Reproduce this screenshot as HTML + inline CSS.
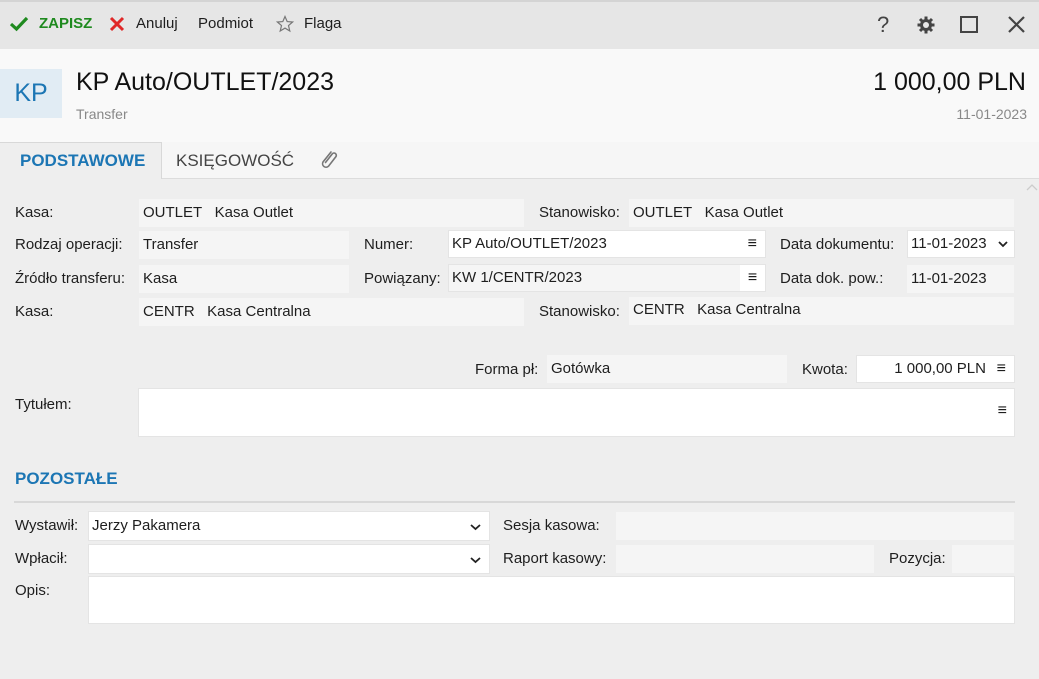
<!DOCTYPE html>
<html><head><meta charset="utf-8"><style>
*{margin:0;padding:0;box-sizing:border-box}
body{width:1039px;height:679px;background:#eeeeee;font-family:"Liberation Sans",sans-serif;font-size:15px;color:#1e1e1e;position:relative;overflow:hidden}
.a{position:absolute;white-space:nowrap}
.l{position:absolute;height:28px;line-height:28px;white-space:nowrap}
.f{position:absolute;height:28px;line-height:28px;background:#f5f5f5;padding-left:4px;white-space:nowrap}
.w{background:#fff;border:1px solid #e4e4e4;line-height:26px;padding-left:3px}
.m{position:absolute;right:8px;top:0;font-size:16px;font-weight:bold}
.c{position:absolute;right:6px;top:9px}
</style></head><body>
<div class="a" style="left:0;top:0;width:1039px;height:49px;background:#e6e6e6;border-top:2px solid #d4d4d4"></div>
<svg class="a" style="left:9px;top:16px" width="20" height="16"><path d="M2 8 L7.5 13 L18 2" stroke="#1f8a1f" stroke-width="3.2" fill="none"/></svg>
<div class="a" style="left:39px;top:15px;color:#1f8a1f;font-weight:bold;font-size:15px">ZAPISZ</div>
<svg class="a" style="left:109px;top:16px" width="16" height="16"><path d="M2 2L14 14M14 2L2 14" stroke="#e02828" stroke-width="3" fill="none"/></svg>
<div class="a" style="left:136px;top:15px;font-size:15px">Anuluj</div>
<div class="a" style="left:198px;top:15px;font-size:15px">Podmiot</div>
<svg class="a" style="left:276px;top:15px" width="18" height="18"><path d="M9 1.5L11.2 6.6L16.6 7L12.5 10.6L13.8 16L9 13.1L4.2 16L5.5 10.6L1.4 7L6.8 6.6Z" stroke="#777" stroke-width="1.2" fill="none"/></svg>
<div class="a" style="left:304px;top:15px;font-size:15px">Flaga</div>
<div class="a" style="left:877px;top:12px;font-size:22px;color:#444">?</div>
<svg class="a" style="left:916px;top:15px" width="20" height="20" viewBox="0 0 20 20"><g fill="#444"><circle cx="10" cy="10" r="6"/><g stroke="#444" stroke-width="3"><path d="M10 1.5V18.5M1.5 10H18.5M4 4L16 16M16 4L4 16"/></g></g><circle cx="10" cy="10" r="3" fill="#e6e6e6"/></svg>
<div class="a" style="left:960px;top:16px;width:18px;height:17px;border:2px solid #444"></div>
<svg class="a" style="left:1007px;top:15px" width="19" height="19"><path d="M2 2L17 17M17 2L2 17" stroke="#444" stroke-width="2.2"/></svg>

<div class="a" style="left:0;top:49px;width:1039px;height:93px;background:#f9f9f9"></div>
<div class="a" style="left:0;top:69px;width:62px;height:49px;background:#e1ecf4;color:#1c76b4;font-size:25px;line-height:49px;text-align:center">KP</div>
<div class="a" style="left:76px;top:68px;font-size:25px;color:#111">KP Auto/OUTLET/2023</div>
<div class="a" style="left:76px;top:106px;font-size:14px;color:#888">Transfer</div>
<div class="a" style="right:13px;top:68px;font-size:25px;color:#111">1 000,00 PLN</div>
<div class="a" style="right:12px;top:106px;font-size:14px;color:#888">11-01-2023</div>

<div class="a" style="left:0;top:142px;width:1039px;height:37px;background:#f6f6f6;border-bottom:1px solid #dcdcdc"></div>
<div class="a" style="left:0;top:142px;width:162px;height:37px;background:#eeeeee;border-right:1px solid #d8d8d8;border-top:1px solid #d8d8d8"></div>
<div class="a" style="left:20px;top:151px;color:#1c76b4;font-weight:bold;font-size:17px">PODSTAWOWE</div>
<div class="a" style="left:176px;top:151px;color:#444;font-size:17px">KSIĘGOWOŚĆ</div>
<svg class="a" style="left:317px;top:147px" width="24" height="26" viewBox="0 0 24 26"><path d="M14 5L6 15a3.5 3.5 0 0 0 5.5 4.2L19 9.5a2.3 2.3 0 0 0-3.6-2.8L8.5 15.5" stroke="#777" stroke-width="1.6" fill="none" stroke-linecap="round"/></svg>
<svg class="a" style="left:1026px;top:183px" width="12" height="8"><path d="M1 7L6 2L11 7" stroke="#ccc" stroke-width="1.3" fill="none"/></svg>

<div class="l" style="left:15px;top:199px">Kasa:</div>
<div class="f" style="left:139px;top:199px;width:385px">OUTLET&nbsp;&nbsp; Kasa Outlet</div>
<div class="l" style="left:539px;top:199px">Stanowisko:</div>
<div class="f" style="left:629px;top:199px;width:385px">OUTLET&nbsp;&nbsp; Kasa Outlet</div>

<div class="l" style="left:15px;top:231px">Rodzaj operacji:</div>
<div class="f" style="left:139px;top:231px;width:210px">Transfer</div>
<div class="l" style="left:364px;top:231px">Numer:</div>
<div class="f w" style="left:448px;top:230px;width:318px">KP Auto/OUTLET/2023<span class="m">≡</span></div>
<div class="l" style="left:780px;top:231px">Data dokumentu:</div>
<div class="f w" style="left:907px;top:230px;width:108px">11-01-2023<svg class="c" width="10" height="8"><path d="M1 2L5 6L9 2" stroke="#222" stroke-width="1.8" fill="none"/></svg></div>

<div class="l" style="left:15px;top:265px">Źródło transferu:</div>
<div class="f" style="left:139px;top:265px;width:210px">Kasa</div>
<div class="l" style="left:364px;top:265px">Powiązany:</div>
<div class="f" style="left:448px;top:264px;width:318px;border:1px solid #e4e4e4;line-height:26px;padding-left:3px">KW 1/CENTR/2023<span class="m" style="background:#fff;right:0;width:25px;height:26px;text-align:center">≡</span></div>
<div class="l" style="left:780px;top:265px">Data dok. pow.:</div>
<div class="f" style="left:907px;top:265px;width:107px">11-01-2023</div>

<div class="l" style="left:15px;top:298px">Kasa:</div>
<div class="f" style="left:139px;top:298px;width:385px">CENTR&nbsp;&nbsp; Kasa Centralna</div>
<div class="l" style="left:539px;top:298px">Stanowisko:</div>
<div class="f" style="left:629px;top:297px;width:385px;line-height:26px">CENTR&nbsp;&nbsp; Kasa Centralna</div>

<div class="l" style="left:475px;top:356px">Forma pł:</div>
<div class="f" style="left:547px;top:355px;width:240px">Gotówka</div>
<div class="l" style="left:802px;top:356px">Kwota:</div>
<div class="f w" style="left:856px;top:355px;width:159px;text-align:right;padding-right:28px">1 000,00 PLN<span class="m">≡</span></div>

<div class="l" style="left:15px;top:391px">Tytułem:</div>
<div class="a" style="left:138px;top:388px;width:877px;height:49px;background:#fff;border:1px solid #e4e4e4"><span style="position:absolute;right:7px;top:13px;font-size:16px;font-weight:bold">≡</span></div>

<div class="a" style="left:15px;top:469px;color:#1c76b4;font-weight:bold;font-size:17px">POZOSTAŁE</div>
<div class="a" style="left:14px;top:501px;width:1001px;height:2px;background:#d8d8d8"></div>

<div class="l" style="left:15px;top:512px">Wystawił:</div>
<div class="f w" style="left:88px;top:511px;width:402px;height:30px;line-height:28px">Jerzy Pakamera<svg class="c" style="right:8px;top:11px" width="11" height="8"><path d="M1 2L5.5 6L10 2" stroke="#222" stroke-width="1.8" fill="none"/></svg></div>
<div class="l" style="left:503px;top:512px">Sesja kasowa:</div>
<div class="f" style="left:616px;top:512px;width:398px"></div>

<div class="l" style="left:15px;top:545px">Wpłacił:</div>
<div class="f w" style="left:88px;top:544px;width:402px;height:30px"><svg class="c" style="right:8px;top:11px" width="11" height="8"><path d="M1 2L5.5 6L10 2" stroke="#222" stroke-width="1.8" fill="none"/></svg></div>
<div class="l" style="left:503px;top:545px">Raport kasowy:</div>
<div class="f" style="left:616px;top:545px;width:258px"></div>
<div class="l" style="left:889px;top:545px">Pozycja:</div>
<div class="f" style="left:952px;top:545px;width:62px"></div>

<div class="l" style="left:15px;top:577px">Opis:</div>
<div class="a" style="left:88px;top:576px;width:927px;height:48px;background:#fff;border:1px solid #e4e4e4"></div>
</body></html>
